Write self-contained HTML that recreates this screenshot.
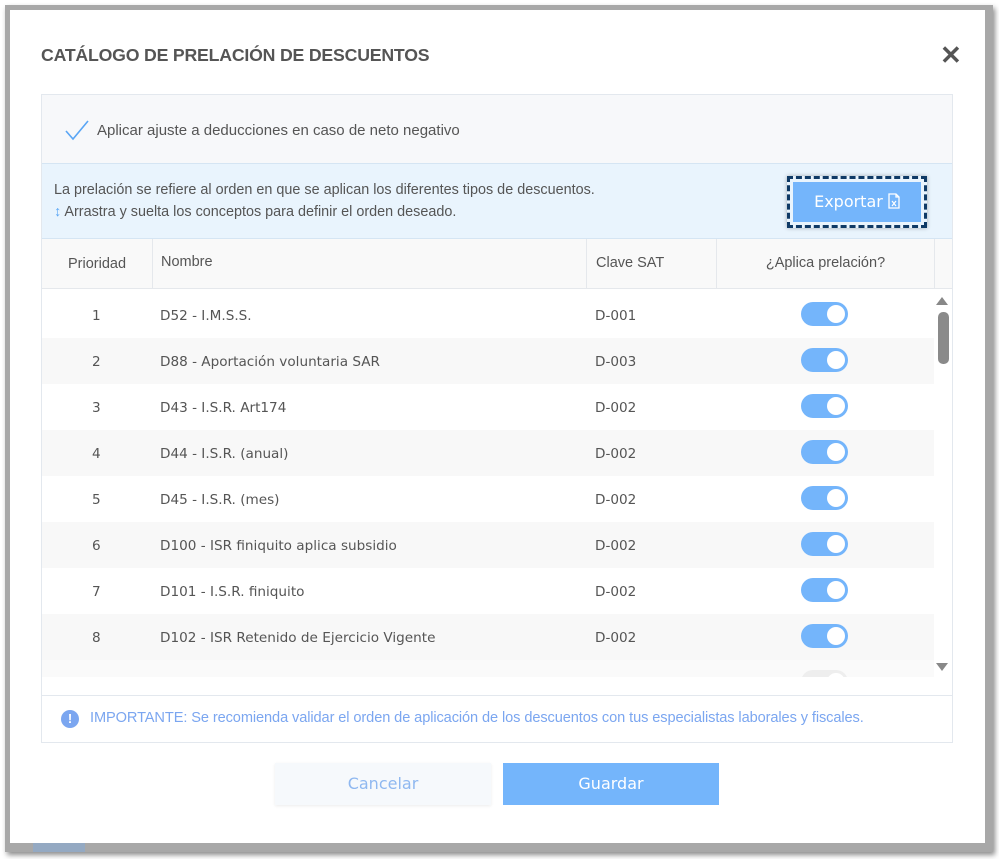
<!DOCTYPE html>
<html><head><meta charset="utf-8"><style>
*{box-sizing:border-box;margin:0;padding:0}
body{width:999px;height:859px;background:#fff;position:relative;overflow:hidden;font-family:"Liberation Sans",sans-serif}
.ov{position:absolute;left:5px;top:5px;width:988px;height:847px;background:#a8a8a8;box-shadow:2px 3px 5px rgba(0,0,0,.45)}
.ov .st{position:absolute;left:28px;top:838px;width:52px;height:9px;background:#94a9c2}
.modal{position:absolute;left:10px;top:10px;width:975px;height:833px;background:#fff}
.title{position:absolute;left:31px;top:35px;font-size:17.7px;font-weight:bold;color:#555;letter-spacing:-.2px}
.x{position:absolute;left:930px;top:30px;font-size:26px;font-weight:bold;color:#555}
.panel{position:absolute;left:31px;top:84px;width:912px;height:649px;border:1px solid #e3e8ee;background:#fff}
.chk{position:absolute;left:0;top:0;width:910px;height:68px;background:#f7f8fa}
.chk span{position:absolute;left:55px;top:27px;font-size:15px;color:#555}
.info{position:absolute;left:0;top:68px;width:910px;height:76px;background:#e9f4fd;border-top:1px solid #d5e5f3;border-bottom:1px solid #d5e5f3}
.info .t{position:absolute;left:12px;top:15px;font-size:14.4px;color:#555;line-height:22px}
.btnx{position:absolute;left:745px;top:12px;width:140px;height:52px;border:3px dashed #0f3a66;box-shadow:0 0 4px rgba(0,0,0,.3)}
.btnx div{position:absolute;left:3px;top:3px;right:3px;bottom:3px;background:#74b5fb;color:#fff;text-align:center;line-height:40px;font-family:"DejaVu Sans",sans-serif;font-size:16px}
.hd{position:absolute;left:0;top:144px;width:910px;height:50px;background:#f9f9f9;border-bottom:1px solid #e5e8ec;font-size:14.5px;color:#555}
.hd div{position:absolute;top:0;height:49px;line-height:49px;border-right:1px solid #e5e8ec}
.row{position:absolute;left:0;width:892px;height:46px;font-family:"DejaVu Sans",sans-serif;font-size:13.6px;color:#555}
.row span{position:absolute;top:16px}
.tg{position:absolute;left:759px;top:10px;width:47px;height:24px;border-radius:12px;background:#74b5fb}
.tg:after{content:"";position:absolute;right:3px;top:3px;width:18px;height:18px;border-radius:50%;background:#fff}
.imp{position:absolute;left:0;top:600px;width:910px;height:48px;border-top:1px solid #e3e8ee;font-size:14.6px;color:#7ba6f0}
.btn{position:absolute;top:753px;height:42px;text-align:center;line-height:42px;font-size:16px;font-family:"DejaVu Sans",sans-serif}
</style></head><body>
<div class="ov"><div class="st"></div></div>
<div class="modal">
<div class="title">CATÁLOGO DE PRELACIÓN DE DESCUENTOS</div>
<div class="x">✕</div>
<div class="panel">
 <div class="chk"><svg style="position:absolute;left:22px;top:24px" width="26" height="22"><path d="M2 12 L9 20 L24 2" stroke="#5aa6f5" stroke-width="1.6" fill="none"/></svg><span>Aplicar ajuste a deducciones en caso de neto negativo</span></div>
 <div class="info"><div class="t">La prelación se refiere al orden en que se aplican los diferentes tipos de descuentos.<br><span style="color:#5aa6f5;font-weight:bold">↕</span> Arrastra y suelta los conceptos para definir el orden deseado.</div>
 <div class="btnx"><div>Exportar <svg width="12" height="16" style="vertical-align:-2px" viewBox="0 0 12 16"><path d="M1 1 H8 L11 4 V15 H1 Z M8 1 V4 H11" stroke="#fff" stroke-width="1.3" fill="none"/><path d="M4 8 L8 13 M8 8 L4 13" stroke="#fff" stroke-width="1.2"/></svg></div></div></div>
 <div class="hd"><div style="left:0;width:111px;text-align:center;padding-top:1px">Prioridad</div><div style="left:111px;width:434px;padding-left:8px;line-height:46px">Nombre</div><div style="left:545px;width:130px;padding-left:9px">Clave SAT</div><div style="left:675px;width:218px;text-align:center">¿Aplica prelación?</div></div>
 <div style="position:absolute;left:0;top:194px;width:910px;height:388px;overflow:hidden">
  <div class="row" style="top:3px;background:#fff"><span style="left:50px">1</span><span style="left:118px">D52 - I.M.S.S.</span><span style="left:553px">D-001</span><div class="tg"></div></div>
  <div class="row" style="top:49px;background:#f8f8f8"><span style="left:50px">2</span><span style="left:118px">D88 - Aportación voluntaria SAR</span><span style="left:553px">D-003</span><div class="tg"></div></div>
  <div class="row" style="top:95px;background:#fff"><span style="left:50px">3</span><span style="left:118px">D43 - I.S.R. Art174</span><span style="left:553px">D-002</span><div class="tg"></div></div>
  <div class="row" style="top:141px;background:#f8f8f8"><span style="left:50px">4</span><span style="left:118px">D44 - I.S.R. (anual)</span><span style="left:553px">D-002</span><div class="tg"></div></div>
  <div class="row" style="top:187px;background:#fff"><span style="left:50px">5</span><span style="left:118px">D45 - I.S.R. (mes)</span><span style="left:553px">D-002</span><div class="tg"></div></div>
  <div class="row" style="top:233px;background:#f8f8f8"><span style="left:50px">6</span><span style="left:118px">D100 - ISR finiquito aplica subsidio</span><span style="left:553px">D-002</span><div class="tg"></div></div>
  <div class="row" style="top:279px;background:#fff"><span style="left:50px">7</span><span style="left:118px">D101 - I.S.R. finiquito</span><span style="left:553px">D-002</span><div class="tg"></div></div>
  <div class="row" style="top:325px;background:#f8f8f8"><span style="left:50px">8</span><span style="left:118px">D102 - ISR Retenido de Ejercicio Vigente</span><span style="left:553px">D-002</span><div class="tg"></div></div>
  <div class="row" style="top:371px;height:17px;background:#fafafa"><div class="tg" style="background:#eee"></div></div>
  <div style="position:absolute;left:894px;top:8px;width:0;height:0;border-left:6px solid transparent;border-right:6px solid transparent;border-bottom:8px solid #888"></div>
  <div style="position:absolute;left:896px;top:23px;width:11px;height:52px;border-radius:5px;background:#8a8a8a"></div>
  <div style="position:absolute;left:894px;top:374px;width:0;height:0;border-left:6px solid transparent;border-right:6px solid transparent;border-top:8px solid #888"></div>
 </div>
 <div class="imp"><span style="position:absolute;left:19px;top:14px;width:18px;height:18px;border-radius:50%;background:#7ba6f0;color:#fff;font-weight:bold;font-size:13px;text-align:center;line-height:18px">!</span><span style="position:absolute;left:48px;top:14px;letter-spacing:-.1px">IMPORTANTE: Se recomienda validar el orden de aplicación de los descuentos con tus especialistas laborales y fiscales.</span></div>
</div>
<div class="btn" style="left:265px;width:216px;background:#f6f9fc;color:#8fb8f0;box-shadow:0 1px 3px rgba(0,0,0,.08)">Cancelar</div>
<div class="btn" style="left:493px;width:216px;background:#74b5fb;color:#fff">Guardar</div>
</div>
</body></html>
